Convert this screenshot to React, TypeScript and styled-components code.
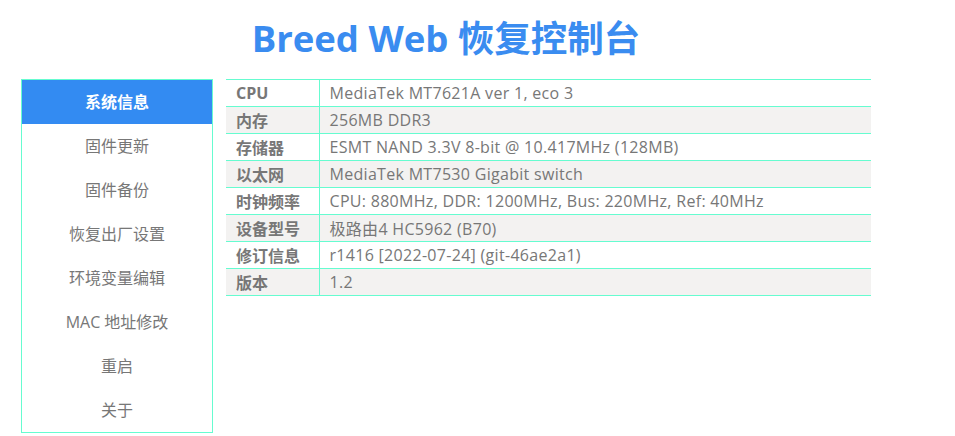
import React, { useState } from "react";
import styled, { createGlobalStyle } from "styled-components";

const GlobalStyle = createGlobalStyle`
  html, body {
    margin: 0;
    padding: 0;
    background: #fff;
    font-family: "Open Sans", "Noto Sans CJK SC", sans-serif;
  }
`;

const menu = [
  "系统信息",
  "固件更新",
  "固件备份",
  "恢复出厂设置",
  "环境变量编辑",
  "MAC 地址修改",
  "重启",
  "关于",
];

const info: [string, string][] = [
  ["CPU", "MediaTek MT7621A ver 1, eco 3"],
  ["内存", "256MB DDR3"],
  ["存储器", "ESMT NAND 3.3V 8-bit @ 10.417MHz (128MB)"],
  ["以太网", "MediaTek MT7530 Gigabit switch"],
  ["时钟频率", "CPU: 880MHz, DDR: 1200MHz, Bus: 220MHz, Ref: 40MHz"],
  ["设备型号", "极路由4 HC5962 (B70)"],
  ["修订信息", "r1416 [2022-07-24] (git-46ae2a1)"],
  ["版本", "1.2"],
];

export default function App() {
  const [active, setActive] = useState(0);

  return (
    <>
      <GlobalStyle />
      <Page>
        <Title>Breed Web 恢复控制台</Title>
        <Body>
          <SideMenu>
            {menu.map((item, i) => (
              <MenuItem
                key={item}
                active={i === active}
                onClick={() => setActive(i)}
              >
                {item}
              </MenuItem>
            ))}
          </SideMenu>
          <InfoTable>
            <tbody>
              {info.map(([label, value], i) => (
                <Row key={label} striped={i % 2 === 1}>
                  <Label>{label}</Label>
                  <Value>{value}</Value>
                </Row>
              ))}
            </tbody>
          </InfoTable>
        </Body>
      </Page>
    </>
  );
}

const Page = styled.div`
  width: 850px;
  margin-left: 21px;
`;

const Title = styled.h1`
  margin: 0;
  padding-top: 14px;
  height: 79px;
  box-sizing: border-box;
  text-align: center;
  font-size: 36.5px;
  line-height: 48px;
  font-weight: 700;
  color: #3a8cf0;
`;

const Body = styled.div`
  display: flex;
  align-items: flex-start;
  gap: 13px;
`;

const SideMenu = styled.ul`
  list-style: none;
  margin: 0;
  padding: 0;
  width: 192px;
  box-sizing: border-box;
  border: 1px solid #66fcd0;
  flex-shrink: 0;
`;

const MenuItem = styled.li<{ active?: boolean }>`
  height: 44px;
  line-height: 44px;
  text-align: center;
  font-size: 16px;
  cursor: pointer;
  color: ${({ active }) => (active ? "#fff" : "#777")};
  background: ${({ active }) => (active ? "#338bf2" : "transparent")};
  font-weight: ${({ active }) => (active ? 700 : 400)};
`;

const InfoTable = styled.table`
  width: 645px;
  border-collapse: collapse;
  font-size: 16px;
  color: #777;
`;

const Row = styled.tr<{ striped?: boolean }>`
  background: ${({ striped }) => (striped ? "#f3f2f1" : "#fff")};
  border-top: 1px solid #66fcd0;
  border-bottom: 1px solid #66fcd0;
`;

const Label = styled.td`
  width: 93px;
  box-sizing: border-box;
  height: 26px;
  padding: 0 10px;
  font-weight: 700;
  border-right: 1px solid #66fcd0;
`;

const Value = styled.td`
  height: 26px;
  padding: 0 10px;
  letter-spacing: 0.3px;
`;
